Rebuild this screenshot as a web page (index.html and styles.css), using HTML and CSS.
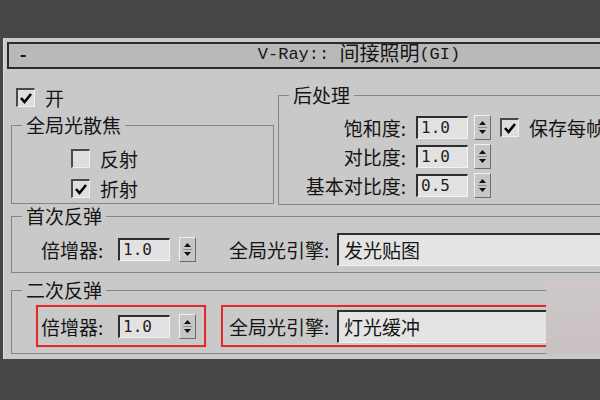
FILE: index.html
```html
<!DOCTYPE html>
<html lang="zh-CN">
<head>
    <meta charset="UTF-8">
    <meta name="viewport" content="width=device-width, initial-scale=1.0">
    <title>V-Ray 间接照明(GI)</title>
    <link rel="stylesheet" href="styles.css">
</head>
<body>
    <div class="panel">
        <div class="titlebar">
            <span class="minus">-</span>
            <span class="title">V-Ray:: <span class="title-cjk">间接照明</span>(GI)</span>
            <span></span>
        </div>

        <div class="top">
            <div class="left-col">
                <div class="check-row on-row">
                    <span class="box"><svg width="16" height="16" viewBox="0 0 16 16"><polyline points="3,8 6.5,12 13,4" /></svg></span>
                    <span>开</span>
                </div>
                <fieldset class="group">
                    <legend>全局光散焦</legend>
                    <div class="caustics">
                        <div class="check-row">
                            <span class="box"></span>
                            <span>反射</span>
                        </div>
                        <div class="check-row">
                            <span class="box"><svg width="16" height="16" viewBox="0 0 16 16"><polyline points="3,8 6.5,12 13,4" /></svg></span>
                            <span>折射</span>
                        </div>
                    </div>
                </fieldset>
            </div>

            <fieldset class="group">
                <legend>后处理</legend>
                <div class="post-grid">
                    <span class="lbl">饱和度:</span>
                    <span class="num">1.0</span>
                    <span class="spin"><svg width="15" height="23" viewBox="0 0 15 23"><polygon points="4,9 7.5,5 11,9" /><line x1="3" y1="11.5" x2="12" y2="11.5" /><polygon points="4,14 11,14 7.5,18" /></svg></span>
                    <div class="check-row save">
                        <span class="box"><svg width="16" height="16" viewBox="0 0 16 16"><polyline points="3,8 6.5,12 13,4" /></svg></span>
                        <span>保存每帧</span>
                    </div>

                    <span class="lbl">对比度:</span>
                    <span class="num">1.0</span>
                    <span class="spin"><svg width="15" height="23" viewBox="0 0 15 23"><polygon points="4,9 7.5,5 11,9" /><line x1="3" y1="11.5" x2="12" y2="11.5" /><polygon points="4,14 11,14 7.5,18" /></svg></span>
                    <span></span>

                    <span class="lbl">基本对比度:</span>
                    <span class="num">0.5</span>
                    <span class="spin"><svg width="15" height="23" viewBox="0 0 15 23"><polygon points="4,9 7.5,5 11,9" /><line x1="3" y1="11.5" x2="12" y2="11.5" /><polygon points="4,14 11,14 7.5,18" /></svg></span>
                    <span></span>
                </div>
            </fieldset>
        </div>

        <fieldset class="group bounce first">
            <legend>首次反弹</legend>
            <div class="bounce-row">
                <div class="pair mult">
                    <span class="pair-lbl">倍增器:</span>
                    <span class="num">1.0</span>
                    <span class="spin"><svg width="15" height="23" viewBox="0 0 15 23"><polygon points="4,9 7.5,5 11,9" /><line x1="3" y1="11.5" x2="12" y2="11.5" /><polygon points="4,14 11,14 7.5,18" /></svg></span>
                </div>
                <div class="pair engine">
                    <span class="pair-lbl">全局光引擎:</span>
                    <span class="field">发光贴图</span>
                </div>
            </div>
        </fieldset>

        <fieldset class="group bounce second">
            <legend>二次反弹</legend>
            <div class="bounce-row">
                <div class="pair mult marked">
                    <span class="pair-lbl">倍增器:</span>
                    <span class="num">1.0</span>
                    <span class="spin"><svg width="15" height="23" viewBox="0 0 15 23"><polygon points="4,9 7.5,5 11,9" /><line x1="3" y1="11.5" x2="12" y2="11.5" /><polygon points="4,14 11,14 7.5,18" /></svg></span>
                </div>
                <div class="pair engine marked">
                    <span class="pair-lbl">全局光引擎:</span>
                    <span class="field">灯光缓冲</span>
                </div>
            </div>
        </fieldset>

        <div class="smudge"></div>
    </div>
</body>
</html>
```

FILE: styles.css
```css
/* Basic reset */
* {
    margin: 0;
    padding: 0;
    box-sizing: border-box;
}

body {
    width: 600px;
    height: 400px;
    overflow: hidden;
    background: #464646;
    font-family: "Noto Sans CJK SC", "Noto Sans", sans-serif;
    color: #141414;
}

.panel {
    position: relative;
    width: 760px;
    height: 321px;
    margin: 38px 0 0 3px;
    padding: 4px 0 0 7px;
    background: #c9c9c9;
    border-left: 1px solid #dcdcdc;
}

/* rollout title */
.titlebar {
    display: grid;
    grid-template-columns: 1fr auto 1fr;
    align-items: center;
    width: 706px;
    height: 27px;
    margin-left: -4px;
    padding: 0 11px 0 9px;
    border: 2px solid #2b2b2b;
    background: #b9b9b9;
    font-family: "Liberation Mono", "Noto Sans CJK SC", monospace;
    font-size: 17px;
    color: #161616;
}

.minus {
    font-weight: bold;
    line-height: 20px;
}

.title {
    line-height: 20px;
    margin-top: -3px;
}

.title-cjk {
    font-family: "Noto Sans CJK SC", sans-serif;
    font-size: 20px;
    vertical-align: -2px;
}

/* group boxes */
.group {
    border: 1px solid #858585;
    min-width: 0;
}

.group legend {
    margin-left: 10px;
    padding: 0 4px;
    font-size: 19px;
    line-height: 20px;
}

.top {
    display: grid;
    grid-template-columns: 263px 420px;
    column-gap: 4px;
    margin-top: 16px;
}

.check-row {
    display: flex;
    align-items: center;
    gap: 10px;
    height: 30px;
    font-size: 19px;
}

.on-row {
    padding: 0 0 6px 5px;
}

.box {
    display: inline-block;
    flex: none;
    width: 19px;
    height: 19px;
    border-top: 2px solid #4a4a4a;
    border-left: 2px solid #4a4a4a;
    border-bottom: 1px solid #efefef;
    border-right: 1px solid #efefef;
    background: #dedede;
}

.box svg {
    display: block;
}

.box polyline {
    fill: none;
    stroke: #000;
    stroke-width: 2.6;
}

.caustics {
    padding: 8px 0 0 59px;
}

.post-grid {
    display: grid;
    grid-template-columns: 133px 58px 26px auto;
    grid-auto-rows: 29px;
    align-items: center;
    padding: 8px 0 4px 4px;
}

.lbl {
    justify-self: end;
    padding-right: 10px;
    font-size: 19px;
}

.save {
    white-space: nowrap;
}

.num {
    display: block;
    width: 52px;
    height: 23px;
    padding-left: 3px;
    border-top: 2px solid #2e2e2e;
    border-left: 2px solid #2e2e2e;
    border-bottom: 1px solid #f2f2f2;
    border-right: 1px solid #f2f2f2;
    background: #e2e2e2;
    font-family: "DejaVu Sans Mono", monospace;
    font-size: 16px;
    line-height: 20px;
    color: #1e1e1e;
}

.spin {
    display: block;
    width: 17px;
    height: 25px;
    border: 1px solid;
    border-color: #f0f0f0 #6c6c6c #6c6c6c #f0f0f0;
    background: #c6c6c6;
}

.spin svg {
    display: block;
}

.spin polygon {
    fill: #111;
}

.spin line {
    stroke: #8a8a8a;
    stroke-width: 1;
}

/* bounces */
.bounce {
    width: 720px;
}

.first {
    margin-top: 1px;
}

.first .bounce-row {
    padding: 2px 0 2px 24px;
}

.second {
    margin-top: 7px;
}

.second .bounce-row {
    padding: 5px 0 6px 24px;
}

.bounce-row {
    display: flex;
    gap: 15px;
}

.pair {
    display: flex;
    align-items: center;
    height: 42px;
    border: 2px solid transparent;
}

.mult {
    width: 170px;
    padding-left: 3px;
}

.mult .pair-lbl {
    width: 72px;
}

.mult .num {
    margin: 0 9px 0 5px;
}

.engine {
    width: 400px;
    padding-left: 6px;
}

.engine .pair-lbl {
    width: 115px;
}

.pair-lbl {
    font-size: 19px;
    white-space: nowrap;
}

.field {
    display: block;
    width: 300px;
    height: 33px;
    padding-left: 5px;
    border-top: 2px solid #2e2e2e;
    border-left: 2px solid #2e2e2e;
    border-bottom: 1px solid #f2f2f2;
    border-right: 1px solid #f2f2f2;
    background: #e4e4e4;
    font-size: 19px;
    line-height: 29px;
}

.marked {
    border-color: #de2a2a;
    box-shadow: 0 0 1px 0 #f08a8a;
}

/* blurred patch over the lower right corner */
.smudge {
    position: absolute;
    left: 542px;
    top: 242px;
    width: 60px;
    height: 75px;
    background: linear-gradient(180deg, #cfc8c8, #c9c1c1);
}
```
